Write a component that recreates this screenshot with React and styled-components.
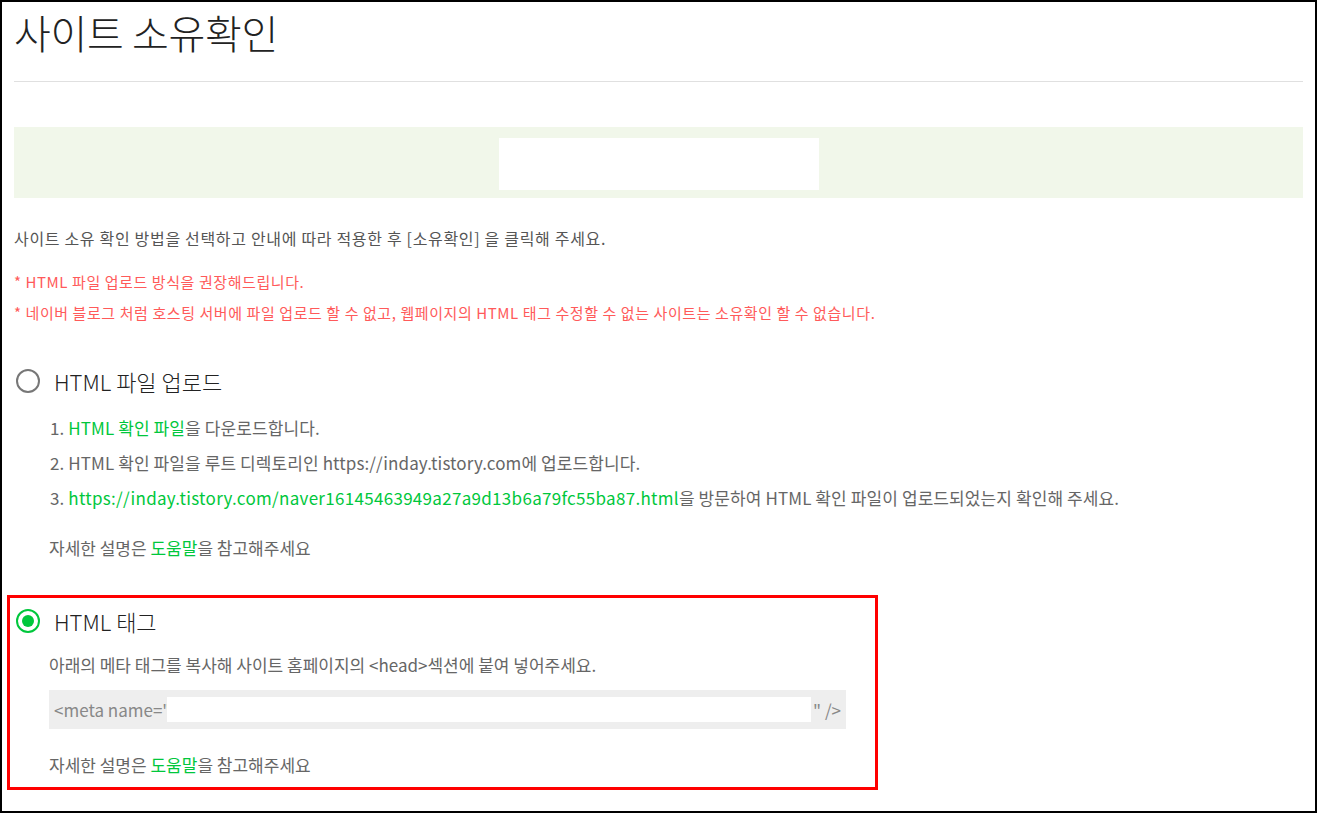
import React from "react"
import styled, { createGlobalStyle } from "styled-components"

const GlobalStyle = createGlobalStyle`
  html, body {
    margin: 0;
    padding: 0;
    background: #fff;
  }
  body {
    font-family: "Noto Sans CJK KR", "Noto Sans", sans-serif;
  }
  * {
    box-sizing: border-box;
  }
`

const green = "#00c73c"

const Page = styled.div`
  width: 1317px;
  height: 813px;
  border: 2px solid #000;
  padding: 0 12px;
  overflow: hidden;
`

const Title = styled.h1`
  margin: 0;
  padding-top: 8px;
  font-size: 40px;
  line-height: 44px;
  font-weight: 300;
  color: #222;
  letter-spacing: -0.3px;
`

const Divider = styled.div`
  margin-top: 27px;
  height: 1px;
  background: #e0e0e0;
`

const Banner = styled.div`
  margin-top: 45px;
  height: 71px;
  padding-top: 11px;
  background: #f1f7ea;
  display: flex;
  justify-content: center;
  align-items: flex-start;
`

const BannerSlot = styled.div`
  width: 320px;
  height: 52px;
  background: #fff;
`

const Intro = styled.p`
  margin: 28px 0 0;
  font-size: 16px;
  line-height: 24px;
  color: #555;
  letter-spacing: 0.68px;
`

const Notices = styled.div`
  margin-top: 16px;
`

const Notice = styled.p`
  margin: 0;
  font-size: 15px;
  line-height: 31px;
  color: #ff5a5a;
  letter-spacing: 0.58px;
`

const Section = styled.section`
  width: ${p => (p.$highlight ? "871px" : "auto")};
  margin-left: -7px;
  margin-top: ${p => p.$gap}px;
  border: 3px solid ${p => (p.$highlight ? "#ff0000" : "transparent")};
  padding: 8px 0 10px 6px;
`

const OptionRow = styled.div`
  display: flex;
  align-items: center;
  height: 30px;
  gap: 14px;
`

const Radio = styled.span`
  width: 24px;
  height: 24px;
  border-radius: 50%;
  border: 2.5px solid ${p => (p.$checked ? green : "#777")};
  display: flex;
  align-items: center;
  justify-content: center;
  &::after {
    content: "";
    display: ${p => (p.$checked ? "block" : "none")};
    width: 12px;
    height: 12px;
    border-radius: 50%;
    background: ${green};
  }
`

const OptionLabel = styled.span`
  font-size: 22px;
  font-weight: 300;
  color: #222;
`

const Body = styled.div`
  padding-left: 33px;
`

const Steps = styled.ol`
  list-style: none;
  margin: 14px 0 0;
  padding: 0 0 0 1px;
`

const Step = styled.li`
  font-size: 17px;
  line-height: 35px;
  color: #666;
  letter-spacing: 0.1px;
  white-space: nowrap;
`

const Link = styled.span`
  color: ${green};
  letter-spacing: ${p => (p.$wide ? "0.3px" : "inherit")};
`

const Help = styled.p`
  margin: ${p => p.$gap}px 0 0;
  font-size: 17px;
  line-height: 24px;
  color: #666;
`

const Guide = styled.p`
  margin: 17px 0 0;
  font-size: 17px;
  line-height: 24px;
  color: #666;
  white-space: nowrap;
`

const CodeBox = styled.div`
  margin-top: 13px;
  width: 797px;
  height: 39px;
  background: #eee;
  display: flex;
  align-items: center;
  padding: 0 5px;
  font-size: 17px;
  color: #888;
  white-space: nowrap;
`

const CodeField = styled.span`
  flex: 1;
  height: 25px;
  background: #fff;
  margin: 0 2px 0 -3px;
`

export default function App() {
  return (
    <>
      <GlobalStyle />
      <Page>
        <Title>사이트 소유확인</Title>
        <Divider />
        <Banner>
          <BannerSlot />
        </Banner>
        <Intro>사이트 소유 확인 방법을 선택하고 안내에 따라 적용한 후 [소유확인] 을 클릭해 주세요.</Intro>
        <Notices>
          <Notice>* HTML 파일 업로드 방식을 권장해드립니다.</Notice>
          <Notice>* 네이버 블로그 처럼 호스팅 서버에 파일 업로드 할 수 없고, 웹페이지의 HTML 태그 수정할 수 없는 사이트는 소유확인 할 수 없습니다.</Notice>
        </Notices>

        <Section $gap={27}>
          <OptionRow>
            <Radio />
            <OptionLabel>HTML 파일 업로드</OptionLabel>
          </OptionRow>
          <Body>
            <Steps>
              <Step>1. <Link>HTML 확인 파일</Link>을 다운로드합니다.</Step>
              <Step>2. HTML 확인 파일을 루트 디렉토리인 https://inday.tistory.com에 업로드합니다.</Step>
              <Step>3. <Link $wide>https://inday.tistory.com/naver16145463949a27a9d13b6a79fc55ba87.html</Link>을 방문하여 HTML 확인 파일이 업로드되었는지 확인해 주세요.</Step>
            </Steps>
            <Help $gap={21}>자세한 설명은 <Link>도움말</Link>을 참고해주세요</Help>
          </Body>
        </Section>

        <Section $gap={22} $highlight>
          <OptionRow>
            <Radio $checked />
            <OptionLabel>HTML 태그</OptionLabel>
          </OptionRow>
          <Body>
            <Guide>아래의 메타 태그를 복사해 사이트 홈페이지의 &lt;head&gt;섹션에 붙여 넣어주세요.</Guide>
            <CodeBox>
              &lt;meta name="<CodeField />" /&gt;
            </CodeBox>
            <Help $gap={24}>자세한 설명은 <Link>도움말</Link>을 참고해주세요</Help>
          </Body>
        </Section>
      </Page>
    </>
  )
}
